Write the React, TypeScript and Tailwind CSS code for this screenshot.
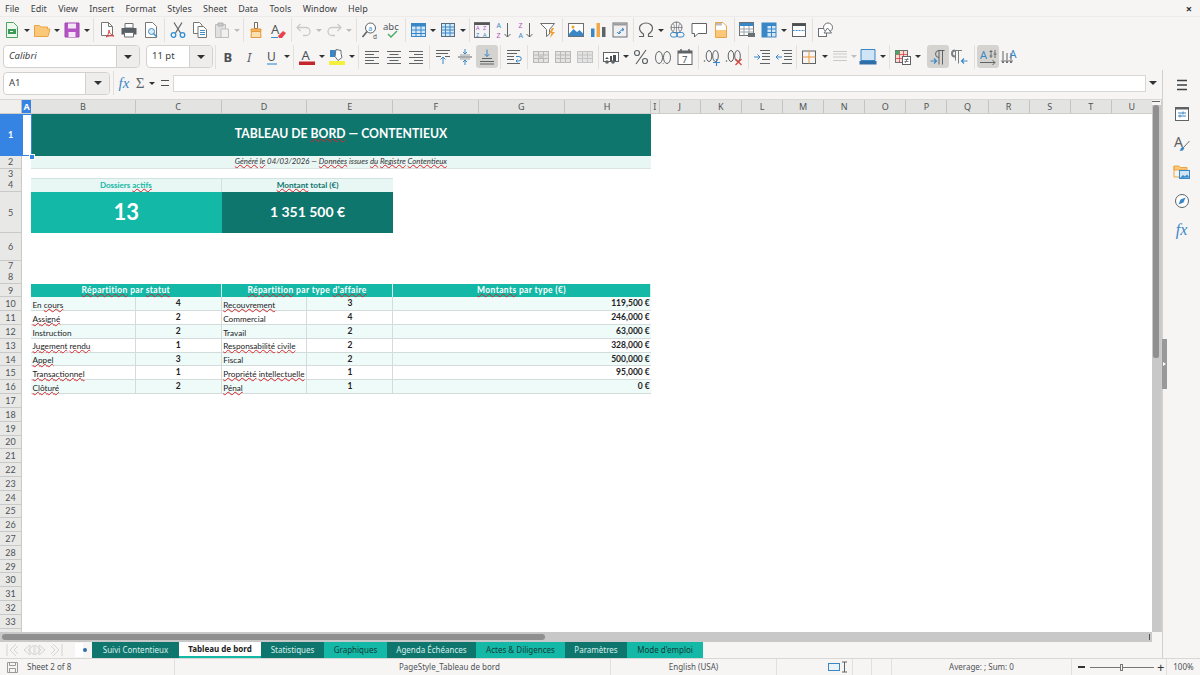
import type { ReactNode } from "react";

const COLS =
  "grid grid-cols-[22px_9px_104.7px_86px_85.7px_86px_85.7px_85.5px_86.2px_9px_41.1px_41.1px_41.1px_41.1px_41.1px_41.1px_41.1px_41.1px_41.1px_41.1px_41.1px_41.1px]";

const I = ({ children }: { children: ReactNode }) => (
  <svg width="18" height="18" viewBox="0 0 18 18" fill="none" strokeWidth="1" overflow="visible">
    {children}
  </svg>
);

const Btn = ({ children, active }: { children: ReactNode; active?: boolean }) => (
  <div className={`w-[22px] h-[23px] flex items-center justify-center rounded-[3px] shrink-0 ${active ? "bg-[#d5d3d0]" : ""}`}>
    {children}
  </div>
);

const Arrow = ({ faded }: { faded?: boolean }) => (
  <div className="w-[8px] h-[22px] flex items-center justify-center shrink-0">
    <div className={`w-0 h-0 border-x-[3px] border-x-transparent border-t-[3px] ${faded ? "border-t-[#bdbdbd]" : "border-t-[#2e3436]"}`} />
  </div>
);

const Sep = ({ className }: { className: string }) => (
  <div className={`${className} h-[24px] shrink-0 flex justify-center`}>
    <div className="w-px h-full bg-[#e2e0dd]" />
  </div>
);

const Lines = ({ rows, color = "#5e6366" }: { rows: [number, number, number][]; color?: string }) => (
  <>
    {rows.map(([x, w, y]) => (
      <path key={`${x}-${y}`} d={`M${x} ${y}h${w}`} stroke={color} />
    ))}
  </>
);

const Cells = ({ color = "#b9b9b9" }: { color?: string }) => (
  <>
    <rect x="1.5" y="3.5" width="15" height="11" fill="#e3e3e3" stroke={color} />
    <path d="M1.5 7h15M1.5 10.5h15M6.5 3.5v11M11.5 3.5v11" stroke={color} />
  </>
);

const Word = ({ children }: { children: ReactNode }) => (
  <span className="relative z-10 underline decoration-wavy decoration-[#d8262c] decoration-[1px] underline-offset-[0px] [text-decoration-skip-ink:none]">{children}</span>
);

const Toolbar1 = () => (
  <div className="h-[26px] flex items-center pl-[1px]">
    <Btn><I><path d="M3.5 1.5h7l4 4v11h-11z" fill="#eef7ee" stroke="#4aa564" /><path d="M5 8h8v5H5z" fill="#3d9a57" /><path d="M7 10.5h3" stroke="#fff" /></I></Btn><Arrow />
    <Btn><I><path d="M1.5 4.5h5l1.5 1.5h6.5v2H17l-2 7.5H1.5z" fill="#fbc778" stroke="#e9a545" /></I></Btn><Arrow />
    <Btn><I><path d="M2 2h14v14H2z" fill="#b454c4" stroke="#a044b0" /><path d="M5 2.5h8v5H5z" fill="#f4e6f7" /><path d="M5.5 11h7v5h-7z" fill="#f4e6f7" /></I></Btn><Arrow />
    <Sep className="w-[5px]" />
    <Btn><I><path d="M3.5 1.5h7l4 4v9h-11z" fill="#fff" stroke="#777" /><path d="M10.5 1.5v4h4" stroke="#777" /><path d="M8 16c2-1 3-5 3-7 0 3 2 5 5 6-3-.5-6 0-8 1z" stroke="#d9423d" /></I></Btn>
    <Btn><I><path d="M5 2.5h8V7H5z" fill="#fff" stroke="#6b7074" /><path d="M1.5 7h15v6.5h-15z" fill="#596065" /><path d="M4.5 11.5h9v4.5h-9z" fill="#fff" stroke="#6b7074" /></I></Btn>
    <Btn><I><path d="M3.5 1.5h7l4 4v11h-11z" fill="#fff" stroke="#777" /><circle cx="9.5" cy="10.5" r="3" fill="#d9ecf8" stroke="#3f8fc9" /><path d="M11.5 12.5l3.5 3.5" stroke="#3f8fc9" strokeWidth="1.5" /></I></Btn>
    <Sep className="w-[5px]" />
    <Btn><I><path d="M5 1.5l6.5 10.5M13 1.5L6.5 12" stroke="#656a6e" strokeWidth="1.3" /><circle cx="4.5" cy="14" r="2.3" stroke="#2f8fd3" strokeWidth="1.3" /><circle cx="13.5" cy="14" r="2.3" stroke="#2f8fd3" strokeWidth="1.3" /></I></Btn>
    <Btn><I><path d="M2.5 1.5h6l2.5 2.5v8.5H2.5z" fill="#fff" stroke="#777" /><path d="M7 5.5h5.5l3 3v8H7z" fill="#fff" stroke="#777" /><Lines rows={[[9, 5, 9.5], [9, 5, 11.5], [9, 5, 13.5]]} color="#3f8fc9" /></I></Btn>
    <Btn><I><path d="M2.5 3.5h10v13h-10z" fill="#e1e1e1" stroke="#bdbdbd" /><path d="M5 2h5v3H5z" fill="#c9c9c9" stroke="#b1b1b1" /><path d="M8 8h7.5v8.5H8z" fill="#f0f0f0" stroke="#bdbdbd" /></I></Btn><Arrow faded />
    <Sep className="w-[4px]" />
    <Btn><I><path d="M7.5 1.5h3v6h-3z" fill="#fff" stroke="#7a6a55" /><path d="M4 8h10v2.5H4z" fill="#f5b35d" stroke="#e39a3a" /><path d="M4.5 10.5h9l.5 6H4z" fill="#fde0ae" stroke="#e39a3a" /></I></Btn>
    <Btn><I><text x="2" y="13" fontSize="13" fill="#53585c" fontFamily="Noto Sans">A</text><path d="M9 15l5-5 3 2-4 5H10z" fill="#e8434a" /><path d="M2 16.5h7" stroke="#3f8fc9" /></I></Btn>
    <Sep className="w-[4px]" />
    <Btn><I><path d="M5.5 3L2 6.5 5.5 10M2.5 6.5H11a4 4 0 0 1 0 8H8" stroke="#c9c9c9" strokeWidth="1.3" /></I></Btn><Arrow faded />
    <Btn><I><path d="M12.5 3L16 6.5 12.5 10M15.5 6.5H7a4 4 0 0 0 0 8h3" stroke="#c9c9c9" strokeWidth="1.3" /></I></Btn><Arrow faded />
    <Sep className="w-[6px]" />
    <Btn><I><circle cx="9.5" cy="7" r="5" fill="#fff" stroke="#5e6366" /><path d="M6 10.5L1.5 16" stroke="#5e6366" strokeWidth="1.6" /><text x="7.2" y="9.5" fontSize="7" fill="#2f8fd3" fontFamily="Noto Sans">a</text><text x="12" y="17.5" fontSize="6.5" fill="#53585c" fontFamily="Noto Sans">d</text></I></Btn>
    <Btn><I><text x="0" y="9" fontSize="9.5" fill="#53585c" fontFamily="Noto Sans">abc</text><path d="M5 13l3 3 6-6" stroke="#45a866" strokeWidth="1.4" /></I></Btn>
    <Sep className="w-[4px]" />
    <Btn><I><rect x="2.5" y="2.5" width="14" height="13" fill="#d4e8f7" stroke="#3a87c8" /><path d="M2.5 2.5h14v3h-14z" fill="#3a87c8" /><path d="M2.5 9h14M2.5 12.5h14M7 2.5v13M12 2.5v13" stroke="#3a87c8" /></I></Btn><Arrow />
    <Btn><I><rect x="2.5" y="2.5" width="13" height="13" fill="#d4e8f7" stroke="#5b6a75" /><path d="M2.5 6h13M2.5 9h13M2.5 12h13M6.5 2.5v13M11 2.5v13" stroke="#3a87c8" /></I></Btn><Arrow />
    <Sep className="w-[4px]" />
    <Btn><I><rect x="1.5" y="1.5" width="15" height="15" fill="#f4f4f4" stroke="#6b7074" /><path d="M1.5 2h15v2h-15z" fill="#555" /><text x="3" y="8.5" fontSize="5.5" fill="#b14fc2" fontFamily="Noto Sans">A</text><text x="10" y="8.5" fontSize="5.5" fill="#b14fc2" fontFamily="Noto Sans">Z</text><text x="3" y="16.2" fontSize="5.5" fill="#3a87c8" fontFamily="Noto Sans">Z</text><text x="10" y="16.2" fontSize="5.5" fill="#3a87c8" fontFamily="Noto Sans">A</text></I></Btn>
    <Btn><I><text x="1.5" y="7" fontSize="7" fill="#3a87c8" fontFamily="Noto Sans">A</text><text x="1.5" y="16.5" fontSize="7" fill="#b14fc2" fontFamily="Noto Sans">Z</text><path d="M12.5 2v14M9.5 13l3 3 3-3" stroke="#5e6366" /></I></Btn>
    <Btn><I><text x="1.5" y="7" fontSize="7" fill="#b14fc2" fontFamily="Noto Sans">Z</text><text x="1.5" y="16.5" fontSize="7" fill="#3a87c8" fontFamily="Noto Sans">A</text><path d="M12.5 2v14M9.5 13l3 3 3-3" stroke="#5e6366" /></I></Btn>
    <Btn><I><path d="M1.5 2.5h14l-5 6v4.5l-3 2.5v-7z" fill="#fff" stroke="#6b7074" /><path d="M13 7l-3 5h2.5L11 17l5-6h-3l2-4z" fill="#f0a030" /></I></Btn>
    <Sep className="w-[6px]" />
    <Btn><I><rect x="1.5" y="2.5" width="15" height="13" fill="#fff" stroke="#6b7074" /><path d="M2 13l4.5-5 3.5 3 2.5-2 4 4v2H2z" fill="#3a87c8" /><circle cx="6" cy="6" r="1.5" fill="#f0a030" /></I></Btn>
    <Btn><I><path d="M2 7.5h3.5V16H2z" fill="#3a87c8" /><path d="M7.5 2H11v14H7.5z" fill="#f0a84a" /><path d="M13 6h3.5v10H13z" fill="#5e6366" /></I></Btn>
    <Btn><I><rect x="2" y="2" width="14" height="14" fill="#f0f0f0" stroke="#6b7074" /><path d="M2.5 2.5h13v2h-13z" fill="#9a9a9a" /><path d="M11 7l2 1.5-2 1.5M13 8.5c-3 0-5 2-5 4M6 11l2 2 2-2" stroke="#3a87c8" /></I></Btn>
    <Sep className="w-[4px]" />
    <Btn><I><path d="M2 15.5h4.5V13C4 11.5 2.5 9.5 2.5 7a6.5 5 0 0 1 13 0c0 2.5-1.5 4.5-4 6v2.5H16" stroke="#5e6366" strokeWidth="1.2" /></I></Btn><Arrow />
    <div className="w-px shrink-0" />
    <Btn><I><circle cx="8.5" cy="6.5" r="5.5" fill="#f3f3f3" stroke="#6b7074" /><path d="M3 6.5h11M8.5 1v11M5 2.5c2 2.5 2 6 0 8M12 2.5c-2 2.5-2 6 0 8" stroke="#6b7074" strokeWidth=".7" /><rect x="2.5" y="11.5" width="7" height="4.5" rx="2.2" stroke="#3a87c8" /><rect x="8.5" y="11.5" width="7.5" height="4.5" rx="2.2" stroke="#3a87c8" /></I></Btn>
    <Btn><I><path d="M2 2.5h14.5v10H8L4.5 16v-3.5H2z" fill="#fff" stroke="#5e6366" /></I></Btn>
    <Btn><I><path d="M3.5 1.5H11l3.5 3.5v11.5h-11z" fill="#fff" stroke="#e9a545" /><path d="M4 9h10v7H4z" fill="#fbc778" /><path d="M4 2h6v2.5H4z" fill="#bdbdbd" /></I></Btn>
    <Sep className="w-[4px]" />
    <Btn><I><rect x="1.5" y="1.5" width="14" height="13" fill="#fff" stroke="#6b7074" /><path d="M1.5 2h14v3h-14z" fill="#3a87c8" /><path d="M1.5 8h14M1.5 11h14M6 5v9.5M11 5v9.5" stroke="#9aa3a9" /><path d="M10 12h7v4h-7z" fill="#6b7074" /></I></Btn>
    <Btn><I><rect x="2" y="2" width="14" height="14" fill="#d4e8f7" stroke="#3a87c8" /><path d="M2 2h5v14H2z" fill="#3a87c8" /><path d="M2 2h14v3H2z" fill="#3a87c8" /><path d="M2 8h14M2 11.5h14M7 2v14M11.5 2v14" stroke="#3a87c8" /></I></Btn><Arrow />
    <Btn><I><rect x="2.5" y="2.5" width="13" height="13" fill="#fff" stroke="#5e6366" /><path d="M2.5 2.5h13V5h-13z" fill="#4b5054" /><path d="M2.5 9.5h13" stroke="#3a87c8" strokeDasharray="2 1" /></I></Btn>
    <Sep className="w-[5px]" />
    <Btn><I><rect x="1.5" y="7.5" width="8" height="8" fill="#fff" stroke="#6b7074" /><circle cx="11" cy="6.5" r="4.5" fill="#fff" stroke="#6b7074" /><path d="M7 12l3.5-5 4 5z" fill="#fff" stroke="#6b7074" /></I></Btn>
  </div>
);

const DropBox = ({ className, text, italic, drop }: { className: string; text: string; italic?: boolean; drop: string }) => (
  <div className={`${className} h-[23px] flex shrink-0 rounded-[4px] border border-[#d3d1ce] bg-white overflow-hidden`}>
    <div className={`flex-1 flex items-center pl-[5px] text-[9.5px] text-[#3d4144] ${italic ? "italic" : ""}`}>{text}</div>
    <div className={`${drop} flex items-center justify-center bg-[#eeedeb] border-l border-[#d3d1ce]`}>
      <div className="w-0 h-0 border-x-[4px] border-x-transparent border-t-[4px] border-t-[#2e3436]" />
    </div>
  </div>
);

const Toolbar2 = () => (
  <div className="h-[27px] flex items-center pl-[3px]">
    <DropBox className="w-[137px]" text="Calibri" italic drop="w-[23px]" />
    <div className="w-[6px] shrink-0" />
    <DropBox className="w-[67px]" text="11 pt" drop="w-[23px]" />
    <Sep className="w-[4px]" />
    <Btn><I><text x="4.5" y="14" fontSize="13" fontWeight="700" fill="#4b5054" fontFamily="Noto Sans">B</text></I></Btn>
    <Btn><I><text x="6" y="14" fontSize="13" fontStyle="italic" fill="#5e6366" fontFamily="Noto Sans">I</text></I></Btn>
    <Btn><I><text x="4" y="12.5" fontSize="12" fill="#4b5054" fontFamily="Noto Sans">U</text><path d="M4 16h10" stroke="#6aa9dd" strokeWidth="1.5" /></I></Btn><Arrow />
    <Sep className="w-[5px]" />
    <Btn><I><text x="3.5" y="12" fontSize="13" fill="#4b5054" fontFamily="Noto Sans">A</text><path d="M1 13.5h16V17H1z" fill="#c5262c" /></I></Btn><Arrow />
    <Btn><I><path d="M2 2h8v7H2z" fill="#3a87c8" /><path d="M8 1.5l5 1v3l1 4-4 3-3-4z" fill="#fff" stroke="#6b7074" /><path d="M1 13h16v4H1z" fill="#f4ef3a" /></I></Btn><Arrow />
    <Sep className="w-[5px]" />
    <Btn><I><Lines rows={[[2, 14, 3.5], [2, 9, 6.5], [2, 14, 9.5], [2, 9, 12.5], [2, 14, 15.5]]} /></I></Btn>
    <Btn><I><Lines rows={[[2, 14, 3.5], [4.5, 9, 6.5], [2, 14, 9.5], [4.5, 9, 12.5], [2, 14, 15.5]]} /></I></Btn>
    <Btn><I><Lines rows={[[2, 14, 3.5], [7, 9, 6.5], [2, 14, 9.5], [7, 9, 12.5], [2, 14, 15.5]]} /></I></Btn>
    <Sep className="w-[5px]" />
    <Btn><I><Lines rows={[[2, 14, 2.5], [2, 12, 5.5]]} /><path d="M2 8.5h5M11 8.5h5" stroke="#5e6366" /><path d="M9 16V9M6.5 11.5L9 9l2.5 2.5" stroke="#3a87c8" /></I></Btn>
    <Btn><I><path d="M2 9h14" stroke="#5e6366" /><path d="M4 7h10M4 11h10" stroke="#9aa0a4" /><path d="M9 1v5M7 4l2 2 2-2M9 17v-5M7 14l2-2 2 2" stroke="#3a87c8" /></I></Btn>
    <Btn active><I><path d="M9 1.5v7M6.5 6L9 8.5 11.5 6" stroke="#3a87c8" /><Lines rows={[[4, 10, 10.5], [2, 14, 13.5], [2, 14, 16]]} /></I></Btn>
    <Sep className="w-[5px]" />
    <Btn><I><Lines rows={[[2, 13, 2.5], [2, 10, 5.5], [2, 7, 8.5], [2, 7, 11.5], [2, 13, 15.5]]} /><path d="M11 8.5h3a2 2 0 0 1 0 4.5h-3M12.5 11.5L11 13l1.5 1.5" stroke="#3a87c8" /></I></Btn>
    <Sep className="w-[5px]" />
    <Btn><I><Cells /><path d="M6 8h6v2H6z" fill="#c9c9c9" /></I></Btn>
    <Btn><I><Cells /></I></Btn>
    <Btn><I><Cells color="#c4c4c4" /></I></Btn>
    <Sep className="w-[4px]" />
    <Btn><I><rect x="1.5" y="4.5" width="15" height="9" fill="#fff" stroke="#5e6366" /><path d="M3 11l2-2 2 2zM8 8h2v5H8zM11 7h3v6h-3z" fill="#4b5054" /><circle cx="5" cy="14" r="1.8" fill="#5e6366" /><circle cx="11" cy="14" r="1.8" fill="#5e6366" /></I></Btn><Arrow />
    <Btn><I><circle cx="5" cy="5" r="2.5" stroke="#5e6366" strokeWidth="1.2" /><circle cx="13" cy="13" r="2.5" stroke="#5e6366" strokeWidth="1.2" /><path d="M14 2L4 16" stroke="#5e6366" strokeWidth="1.2" /></I></Btn>
    <Btn><I><ellipse cx="5" cy="9.5" rx="3.5" ry="6" stroke="#5e6366" /><ellipse cx="13" cy="9.5" rx="3.5" ry="6" stroke="#5e6366" /><path d="M8.8 15.5h.7" stroke="#5e6366" /></I></Btn>
    <Btn><I><rect x="2" y="3" width="14" height="13.5" fill="#fff" stroke="#5e6366" /><path d="M2 3h14v2.5H2z" fill="#5e6366" /><path d="M5 1v3M13 1v3" stroke="#5e6366" strokeWidth="1.5" /><text x="6" y="15" fontSize="9.5" fill="#4b5054" fontFamily="Noto Sans">7</text></I></Btn>
    <Sep className="w-[5px]" />
    <Btn><I><circle cx="1.5" cy="13" r=".8" fill="#5e6366" /><ellipse cx="6" cy="8" rx="2.8" ry="5.5" stroke="#5e6366" /><ellipse cx="12.5" cy="8" rx="2.8" ry="5.5" stroke="#5e6366" /><path d="M10 14.5h7M13.5 11v7" stroke="#3a87c8" strokeWidth="1.2" /></I></Btn>
    <Btn><I><circle cx="1.5" cy="13" r=".8" fill="#5e6366" /><ellipse cx="6" cy="8" rx="2.8" ry="5.5" stroke="#5e6366" /><ellipse cx="12.5" cy="8" rx="2.8" ry="5.5" stroke="#5e6366" /><path d="M10.5 11l6 6M16.5 11l-6 6" stroke="#d9423d" strokeWidth="1.2" /></I></Btn>
    <Sep className="w-[6px]" />
    <Btn><I><Lines rows={[[7, 10, 2.5], [9, 8, 5.5], [9, 8, 8.5], [9, 8, 11.5], [7, 10, 15.5]]} /><path d="M1 9h6M4.5 6.5L7 9l-2.5 2.5" stroke="#3a87c8" /></I></Btn>
    <Btn><I><Lines rows={[[7, 10, 2.5], [9, 8, 5.5], [9, 8, 8.5], [9, 8, 11.5], [7, 10, 15.5]]} /><path d="M7 9H1M3.5 6.5L1 9l2.5 2.5" stroke="#3a87c8" /></I></Btn>
    <Sep className="w-[3px]" />
    <Btn><I><rect x="2.5" y="3" width="13" height="12.5" stroke="#5e6366" /><path d="M9 3v12.5M2.5 9h13" stroke="#e9963d" /></I></Btn>
    <div className="w-[9px] h-[22px] flex items-center justify-center shrink-0"><div className="w-0 h-0 border-x-[3px] border-x-transparent border-t-[3px] border-t-[#2e3436]" /></div>
    <Btn><I><Lines rows={[[2, 14, 3.5], [2, 14, 6], [2, 14, 9], [2, 14, 12.5]]} color="#c9c9c9" /></I></Btn>
    <div className="w-[6px] h-[22px] flex items-center justify-center shrink-0"><div className="w-0 h-0 border-x-[3px] border-x-transparent border-t-[3px] border-t-[#bdbdbd]" /></div>
    <Btn><I><path d="M2 1.5h14v11H2z" fill="#cfe4f5" stroke="#3a87c8" /><path d="M.5 13h17v3.5H.5z" fill="#2f6ea8" /></I></Btn><Arrow />
    <Sep className="w-[5px]" />
    <Btn><I><rect x="1.5" y="2.5" width="12" height="12" fill="#f9dcd9" stroke="#6b7074" /><path d="M1.5 6.5h12M1.5 10.5h12M5.5 2.5v12M9.5 2.5v12" stroke="#d9423d" strokeWidth=".8" /><path d="M1.5 2.5h4v4h-4z" fill="#45a866" /><rect x="8.5" y="8.5" width="8" height="8" fill="#fff" stroke="#5e6366" /><path d="M10.5 11.5h4M10.5 13.5h4M14 10l-3 5" stroke="#5e6366" strokeWidth=".8" /></I></Btn><Arrow />
    <div className="w-[5px] shrink-0" />
    <Btn active><I><path d="M9.5 2.5h6M10 2.5v14M13.5 2.5v14" stroke="#5e6366" /><path d="M10 2.5a3 3 0 0 0 0 7" stroke="#5e6366" /><path d="M1.5 13h6M5 10.5L7.5 13 5 15.5" stroke="#3a87c8" strokeWidth="1.2" /></I></Btn>
    <Btn><I><path d="M3 2.5h8M4.5 2.5v10M7.5 2.5v13" stroke="#7a7f83" /><path d="M4 2.5a3 3 0 0 0 0 6" stroke="#7a7f83" strokeWidth="2" /><path d="M16.5 13h-6M13 10.5L10.5 13l2.5 2.5" stroke="#3a87c8" strokeWidth="1.2" /></I></Btn>
    <Sep className="w-[6px]" />
    <Btn active><I><text x="1" y="10.5" fontSize="11" fill="#3a87c8" fontFamily="Noto Sans">A</text><path d="M12 2v8M16 2v8M10.5 3.5h3M14.5 6h3M10.5 8h3" stroke="#5e6366" strokeWidth=".9" /><path d="M1 14.5h15M13.5 12l2.5 2.5-2.5 2.5" stroke="#5e6366" /></I></Btn>
    <Btn><I><path d="M2 3v12M.5 12.5L2 15l1.5-2.5M6 5v10M4.5 12.5L6 15l1.5-2.5M10 5v10M8.5 12.5L10 15l1.5-2.5" stroke="#5e6366" /><text x="8.5" y="10" fontSize="11" fill="#3a87c8" fontFamily="Noto Sans">A</text></I></Btn>
  </div>
);

const FormulaBar = () => (
  <div className="h-[30px] flex items-center pl-[3px] pb-[3px] border-b border-[#d9d7d4]">
    <DropBox className="w-[107px]" text="A1" drop="w-[24px]" />
    <Sep className="w-[6px]" />
    <div className="w-[16px] text-center text-[15px] italic text-[#3a87c8] font-['Liberation_Serif',serif] leading-none shrink-0">fx</div>
    <div className="w-[16px] text-center text-[15px] text-[#5e6366] leading-none font-['Liberation_Serif',serif] shrink-0">Σ</div>
    <Arrow />
    <div className="w-[17px] flex justify-center shrink-0">
      <div className="w-[8px] h-[6px] border-y-[1.5px] border-[#4b5054]" />
    </div>
    <div className="w-[973px] h-[17px] bg-white border border-[#d9d7d4] shrink-0" />
    <div className="w-[13px] flex justify-center shrink-0">
      <div className="w-0 h-0 border-x-[4px] border-x-transparent border-t-[4px] border-t-[#2e3436]" />
    </div>
  </div>
);

const COLUMN_NAMES = ["B", "C", "D", "E", "F", "G", "H", "I", "J", "K", "L", "M", "N", "O", "P", "Q", "R", "S", "T", "U"];

const ColumnHeader = () => (
  <div className={`${COLS} h-[14px] shrink-0 bg-[#e3e3e1] border-b border-[#cfcdca]`}>
    <div className="bg-[#f0efed] border-r border-[#bdbdbd]" />
    <div className="bg-[#3584e4] text-white text-[9px] font-bold flex items-center justify-center leading-none">A</div>
    {COLUMN_NAMES.map((n) => (
      <div key={n} className="border-r border-[#c4c4c2] text-[9px] text-[#4f5356] flex items-center justify-center leading-none">{n}</div>
    ))}
  </div>
);

const RowHead = ({ label, active }: { label: string | number; active?: boolean }) => (
  <div className={`border-r border-b flex items-center justify-center text-[9px] leading-none ${active ? "bg-[#3584e4] text-white border-[#3584e4] font-bold" : "bg-[#e8e8e6] text-[#4f5356] border-[#c9c9c7]"}`}>
    {label}
  </div>
);

const TableHead = ({ className, children }: { className: string; children: ReactNode }) => (
  <div className={`${className} bg-[#14b8a6] border-r border-[#d5efeb] flex items-center justify-center text-[8.5px] font-bold text-white tracking-[0.35px] leading-none`}>
    <span>{children}</span>
  </div>
);

const TABLE: { status: ReactNode; n1: number; type: ReactNode; n2: number; amount: string }[] = [
  { status: <>En <Word>cours</Word></>, n1: 4, type: <Word>Recouvrement</Word>, n2: 3, amount: "119,500 €" },
  { status: <Word>Assigné</Word>, n1: 2, type: "Commercial", n2: 4, amount: "246,000 €" },
  { status: "Instruction", n1: 2, type: "Travail", n2: 2, amount: "63,000 €" },
  { status: <><Word>Jugement</Word> <Word>rendu</Word></>, n1: 1, type: <><Word>Responsabilité</Word> <Word>civile</Word></>, n2: 2, amount: "328,000 €" },
  { status: <Word>Appel</Word>, n1: 3, type: "Fiscal", n2: 2, amount: "500,000 €" },
  { status: <Word>Transactionnel</Word>, n1: 1, type: <><Word>Propriété</Word> <Word>intellectuelle</Word></>, n2: 1, amount: "95,000 €" },
  { status: <Word>Clôturé</Word>, n1: 2, type: <Word>Pénal</Word>, n2: 1, amount: "0 €" },
];

const EMPTY_ROWS = [17, 18, 19, 20, 21, 22, 23, 24, 25, 26, 27, 28, 29, 30, 31, 32, 33];

const Sheet = () => (
  <div className="relative flex-1 overflow-hidden bg-white font-['Lato',sans-serif]">
    {/* row 1 */}
    <div className={`${COLS} h-[41.7px]`}>
      <RowHead label={1} active />
      <div />
      <div className="col-span-7 bg-[#0f766e] flex items-center justify-center pb-[3px] text-[14px] font-bold text-white leading-none">
        <span className="inline-block whitespace-nowrap scale-x-[0.87]">TABLEAU DE <Word>BORD</Word> — CONTENTIEUX</span>
      </div>
    </div>
    {/* row 2 */}
    <div className={`${COLS} h-[13.3px]`}>
      <RowHead label={2} />
      <div />
      <div className="col-span-7 bg-[#e8f6f4] border-b border-[#dbe4e2] flex items-center justify-center text-[7.8px] italic text-[#333] leading-none">
        <span><Word>Généré</Word> <Word>le</Word> 04/03/2026 — <Word>Données</Word> issues <Word>du</Word> <Word>Registre</Word> <Word>Contentieux</Word></span>
      </div>
    </div>
    <div className={`${COLS} h-[8.7px]`}><RowHead label={3} /></div>
    {/* rows 4 and 5: indicators */}
    <div className={`${COLS} h-[14px]`}>
      <RowHead label={4} />
      <div />
      <div className="col-span-2 bg-[#e8f6f4] border-r border-t border-[#cfe3e0] flex items-center justify-center text-[8px] font-bold text-[#14b8a6] leading-none">
        <span>Dossiers <Word>actifs</Word></span>
      </div>
      <div className="col-span-2 bg-[#e8f6f4] border-t border-[#cfe3e0] flex items-center justify-center text-[8.2px] font-bold text-[#0f766e] leading-none">
        <span><Word>Montant</Word> total (€)</span>
      </div>
    </div>
    <div className={`${COLS} h-[41.7px]`}>
      <RowHead label={5} />
      <div />
      <div className="col-span-2 bg-[#14b8a6] flex items-center justify-center pb-[2px] text-[22px] font-bold text-white leading-none">13</div>
      <div className="col-span-2 bg-[#0f766e] flex items-center justify-center pb-[1px] text-[14px] font-bold text-white leading-none">1 351 500 €</div>
    </div>
    <div className={`${COLS} h-[27.7px]`}><RowHead label={6} /></div>
    <div className={`${COLS} h-[9px]`}><RowHead label={7} /></div>
    <div className={`${COLS} h-[13.7px]`}><RowHead label={8} /></div>
    {/* row 9: table headers */}
    <div className={`${COLS} h-[13.6px]`}>
      <RowHead label={9} />
      <div />
      <TableHead className="col-span-2"><Word>Répartition</Word> par <Word>statut</Word></TableHead>
      <TableHead className="col-span-2"><Word>Répartition</Word> par type <Word>d'affaire</Word></TableHead>
      <TableHead className="col-span-3"><Word>Montants</Word> par type (€)</TableHead>
    </div>
    {/* rows 10 to 16 */}
    {TABLE.map((r, i) => {
      const bg = i % 2 === 0 ? "bg-[#effbf9]" : "bg-white";
      const label = `${bg} border-r border-b border-[#d3dcda] pl-[1.5px] text-[8.2px] text-[#222] leading-none flex items-end pb-[1px] whitespace-nowrap`;
      const count = `${bg} border-r border-b border-[#d3dcda] text-[8.5px] font-bold text-[#222] leading-none flex items-start justify-center pt-[2px]`;
      return (
        <div key={i} className={`${COLS} h-[13.83px]`}>
          <RowHead label={10 + i} />
          <div />
          <div className={label}><span>{r.status}</span></div>
          <div className={count}>{r.n1}</div>
          <div className={label}><span>{r.type}</span></div>
          <div className={count}>{r.n2}</div>
          <div className={`col-span-3 ${bg} border-b border-[#d3dcda] text-[8.5px] font-bold text-[#222] leading-none flex items-start justify-end pt-[2px] pr-[1px]`}>{r.amount}</div>
        </div>
      );
    })}
    {EMPTY_ROWS.map((n) => (
      <div key={n} className={`${COLS} h-[13.8px]`}><RowHead label={n} /></div>
    ))}
    <div className={`${COLS} h-[6px]`}><RowHead label="" /></div>
    {/* selection frame of A1 */}
    <div className="absolute left-[21.5px] top-0 w-[10px] h-[42px] border border-[#3584e4]" />
    <div className="absolute left-[29px] top-[39.5px] w-[4px] h-[4px] bg-[#3584e4] border border-white box-content" />
  </div>
);

const VerticalBar = () => (
  <div className="w-[10px] shrink-0 bg-[#f6f5f4] flex flex-col border-r border-[#cfcdca]">
    <div className="h-[1px] mt-[1px] mr-[1px] bg-[#666]" />
    <div className="flex-1 bg-[#c8c8c8] mt-[3px] pl-[1px] pr-[2px]">
      <div className="h-[253px] bg-[#8f8f8f] rounded-t-[3px] rounded-b-[2px]" />
    </div>
  </div>
);

const TABS = [
  { name: "Suivi Contentieux", w: "w-[87px]", cls: "bg-[#0f766e] text-[#d8efec]" },
  { name: "Tableau de bord", w: "w-[82px]", cls: "bg-white text-[#222] font-bold border-b-2 border-[#14b8a6]" },
  { name: "Statistiques", w: "w-[63px]", cls: "bg-[#0f766e] text-[#d8efec]" },
  { name: "Graphiques", w: "w-[63px]", cls: "bg-[#14b8a6] text-[#143c38]" },
  { name: "Agenda Échéances", w: "w-[89px]", cls: "bg-[#0f766e] text-[#d8efec]" },
  { name: "Actes & Diligences", w: "w-[89px]", cls: "bg-[#14b8a6] text-[#143c38]" },
  { name: "Paramètres", w: "w-[62px]", cls: "bg-[#0f766e] text-[#d8efec]" },
  { name: "Mode d'emploi", w: "w-[76px]", cls: "bg-[#14b8a6] text-[#143c38]" },
];

const NavGlyph = ({ d }: { d: string }) => (
  <svg width="15" height="14" viewBox="0 0 15 14" fill="none" stroke="#d4d4d2">
    <path d={d} />
  </svg>
);

const TabBar = () => (
  <div className="h-[16px] flex items-stretch">
    <div className="w-[75px] flex items-center pl-[5px] shrink-0">
      <NavGlyph d="M2 1v12M11 1L5 7l6 6M13 3L9 7l4 4" />
      <NavGlyph d="M10 2L4 7l6 5zM14 2L8 7l6 5z" />
      <NavGlyph d="M4 2l6 5-6 5zM0 2l6 5-6 5z" />
      <NavGlyph d="M3 1l6 6-6 6M1 3l4 4-4 4M12 1v12" />
    </div>
    <div className="w-[17px] shrink-0 flex items-center">
      <div className="w-[8px] h-[14px] bg-white" />
      <div className="w-[4px] h-[4px] rounded-full bg-[#2f6ea8]" />
    </div>
    {TABS.map((t) => (
      <div key={t.name} className={`${t.w} ${t.cls} flex items-center justify-center text-[8px] leading-none whitespace-nowrap shrink-0`}>
        {t.name}
      </div>
    ))}
  </div>
);

const StatusCell = ({ className, children }: { className: string; children?: ReactNode }) => (
  <div className={`${className} shrink-0 h-full flex items-center border-r border-[#e2e0dd]`}>{children}</div>
);

const StatusBar = () => (
  <div className="h-[17px] flex items-center border-t border-[#d9d7d4] text-[8px] text-[#4f5356] leading-none">
    <StatusCell className="w-[175px] pl-[6px]">
      <svg width="13" height="13" viewBox="0 0 13 13" fill="none" stroke="#9a9a9a"><path d="M1.5 1.5h10v10h-10z" /><path d="M3.5 1.5v3h6v-3M3.5 11.5v-4h6v4" /></svg>
      <span className="ml-[8px]">Sheet 2 of 8</span>
    </StatusCell>
    <StatusCell className="w-[436px] pl-[224px]">PageStyle_Tableau de bord</StatusCell>
    <StatusCell className="w-[166px] justify-center">English (USA)</StatusCell>
    <StatusCell className="w-[76px] pl-[51px]">
      <svg width="24" height="12" viewBox="0 0 24 12" fill="none"><rect x=".5" y="2.5" width="11" height="7" fill="#eaf3fa" stroke="#3a87c8" /><path d="M14 1h5M14 11h5M16.5 1v10" stroke="#5e6366" /></svg>
    </StatusCell>
    <StatusCell className="w-[19px]" />
    <StatusCell className="w-[20px]" />
    <StatusCell className="w-[180px] justify-center">Average: ; Sum: 0</StatusCell>
    <div className="w-[95px] shrink-0 h-full flex items-center pl-[6px] border-r border-[#e2e0dd]">
      <div className="w-[7px] h-[1.5px] bg-[#333]" />
      <div className="relative w-[64px] h-px ml-[5px] bg-[#777]">
        <div className="absolute left-[30px] top-[-3px] w-[3px] h-[7px] bg-[#f6f5f4] border border-[#777]" />
      </div>
      <div className="ml-[3px] text-[13px] text-[#333] leading-none">+</div>
    </div>
    <div className="flex-1 text-center">100%</div>
  </div>
);

const Sidebar = () => (
  <div className="relative w-[38px] shrink-0 border-l border-[#d3d1ce] bg-[#f6f5f4] flex flex-col items-center pt-[6px] gap-[11px]">
    <svg width="18" height="18" viewBox="0 0 18 18" fill="none" stroke="#3d4144" strokeWidth="1.3"><path d="M4 4.5h10M4 9h10M4 13.5h10" /></svg>
    <svg width="18" height="18" viewBox="0 0 18 18" fill="none"><rect x="2.5" y="2.5" width="13" height="13" fill="#fff" stroke="#5e6366" /><path d="M2.5 2.5h13v2h-13z" fill="#5e6366" /><path d="M5 8h8M5 11h8M10 6.5v3M7 9.5v3" stroke="#3a87c8" /></svg>
    <svg width="18" height="18" viewBox="0 0 18 18" fill="none" overflow="visible"><text x="1" y="13" fontSize="14" fill="#5e6366" fontFamily="Noto Sans">A</text><path d="M16.5 7l-6 6.5" stroke="#6b7074" /><path d="M8 14c2-2 4-1 3 1s-3 2-4.5 1.5C7.5 16 7.5 15 8 14z" fill="#3a87c8" /></svg>
    <svg width="18" height="18" viewBox="0 0 18 18" fill="none"><path d="M1 3h5l1.5 1.5H14V7H1z" fill="#fbc778" stroke="#e9a545" /><path d="M1 3v11h5" stroke="#e9a545" /><rect x="6.5" y="7.5" width="10" height="8" fill="#cfe4f5" stroke="#3a87c8" /><path d="M7 15l3-3 2 1.5 2-2 2.5 3z" fill="#3a87c8" /></svg>
    <svg width="18" height="18" viewBox="0 0 18 18" fill="none"><circle cx="9" cy="9" r="6.5" fill="#fff" stroke="#5e6366" /><path d="M12.5 5.5l-2 5-5 2 2-5z" fill="#3a87c8" /></svg>
    <div className="w-[18px] h-[18px] text-center text-[16px] italic text-[#3a87c8] font-['Liberation_Serif',serif] leading-[18px]">fx</div>
    <div className="absolute left-[-1px] top-[269px] w-[5px] h-[50px] bg-[#999] flex items-center justify-center">
      <div className="w-0 h-0 border-y-[2px] border-y-transparent border-l-[3px] border-l-white" />
    </div>
  </div>
);

export default function App() {
  return (
    <div className="w-[1200px] h-[675px] overflow-hidden flex flex-col bg-[#f6f5f4] font-['Noto_Sans',sans-serif]">
      {/* menu bar */}
      <div className="h-[17px] flex items-center border-b border-[#ecebe9] text-[9px] text-[#3d4144] leading-none pl-[5px] gap-[11.3px]">
        {["File", "Edit", "View", "Insert", "Format", "Styles", "Sheet", "Data", "Tools", "Window", "Help"].map((m) => (
          <span key={m}>{m}</span>
        ))}
        <span className="ml-auto mr-[8px] text-[11px] font-bold text-[#2e3436]">×</span>
      </div>
      <Toolbar1 />
      <Toolbar2 />
      <div className="flex flex-1 min-h-0">
        <div className="w-[1162px] shrink-0 flex flex-col">
          <FormulaBar />
          <div className="flex flex-1 min-h-0">
            <div className="w-[1152px] shrink-0 flex flex-col">
              <ColumnHeader />
              <Sheet />
            </div>
            <VerticalBar />
          </div>
          {/* horizontal scrollbar */}
          <div className="h-[10px] flex items-center bg-[#c8c8c8] mr-[10px] relative pl-[2px]">
            <div className="w-[543px] h-[6px] bg-[#8f8f8f] rounded-[3px]" />
            <div className="absolute right-[2px] top-[2px] w-px h-[6px] bg-[#555]" />
          </div>
          <TabBar />
        </div>
        <Sidebar />
      </div>
      <StatusBar />
    </div>
  );
}
